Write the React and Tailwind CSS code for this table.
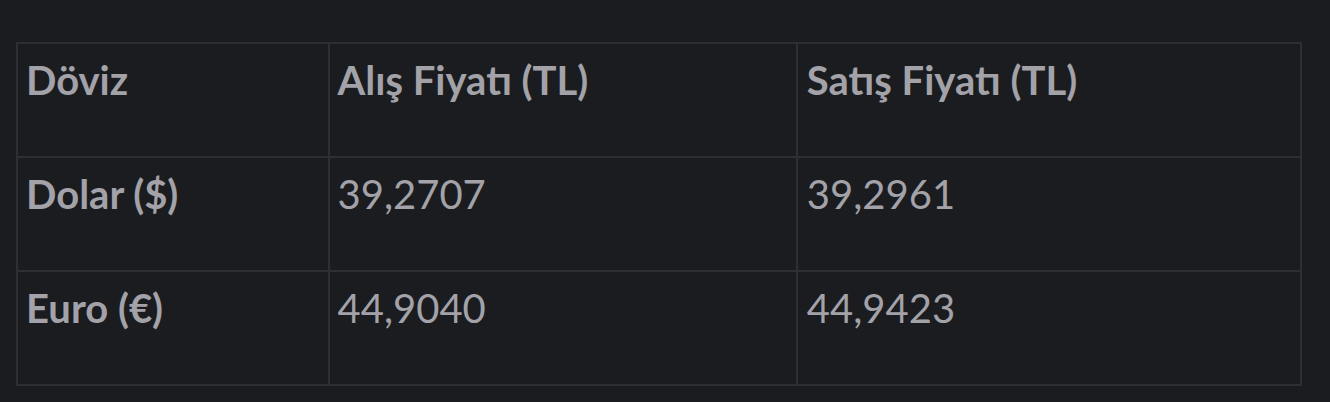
export default function App() {
  const rows = [
    ["Dolar ($)", "39,2707", "39,2961"],
    ["Euro (€)", "44,9040", "44,9423"],
  ];

  return (
    <div className="min-h-screen w-full bg-[#1b1c20] px-4 pt-[42px] font-['Lato',sans-serif] text-[#a2a2a8]">
      <table className="w-[1286px] border-collapse border-2 border-[#2e2f33] text-[40px] leading-[1.4]">
        <colgroup>
          <col className="w-[312px]" />
          <col className="w-[469px]" />
          <col className="w-[505px]" />
        </colgroup>
        <thead>
          <tr className="h-[114px]">
            <th className="border-2 border-[#2e2f33] px-[8px] pt-[8px] text-left align-top font-bold">Döviz</th>
            <th className="border-2 border-[#2e2f33] px-[8px] pt-[8px] text-left align-top font-bold">Alış Fiyatı (TL)</th>
            <th className="border-2 border-[#2e2f33] px-[9px] pt-[8px] text-left align-top font-bold">Satış Fiyatı (TL)</th>
          </tr>
        </thead>
        <tbody>
          {rows.map((r) => (
            <tr key={r[0]} className="h-[114px]">
              <td className="border-2 border-[#2e2f33] px-[8px] pt-[8px] align-top font-bold">{r[0]}</td>
              <td className="border-2 border-[#2e2f33] px-[8px] pt-[8px] align-top">{r[1]}</td>
              <td className="border-2 border-[#2e2f33] px-[9px] pt-[8px] align-top">{r[2]}</td>
            </tr>
          ))}
        </tbody>
      </table>
    </div>
  );
}
